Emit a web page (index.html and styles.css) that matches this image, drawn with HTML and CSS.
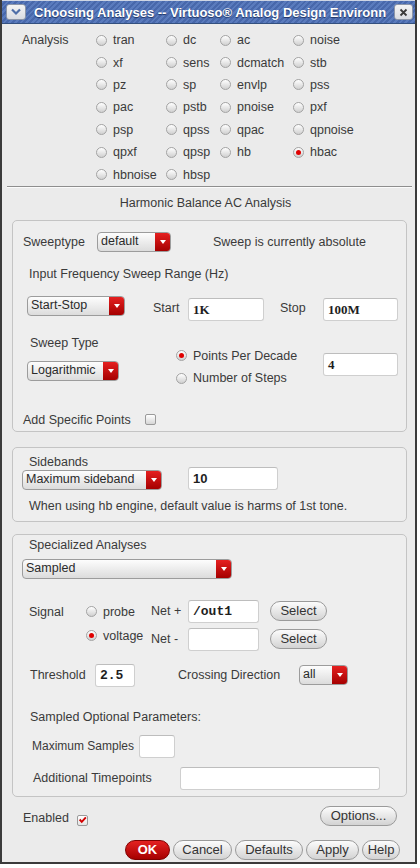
FILE: index.html
```html
<!DOCTYPE html>
<html>
<head>
<meta charset="utf-8">
<link rel="stylesheet" href="styles.css">
</head>
<body>
<div class="window">
  <div class="titlebar">
    <div class="tb-btn menu"><svg width="12" height="8" viewBox="0 0 12 8"><path d="M2 1.5 L6 5.5 L10 1.5" stroke="#4f6fa8" stroke-width="2.2" fill="none"/></svg></div>
    <div class="title">Choosing Analyses -- Virtuoso® Analog Design Environn</div>
    <div class="tb-btn close"><svg width="9" height="9" viewBox="0 0 9 9"><path d="M1.5 1.5 L7.5 7.5 M7.5 1.5 L1.5 7.5" stroke="#3a3a3a" stroke-width="1.8"/></svg></div>
  </div>

  <div class="analysis">
    <div class="a-label">Analysis</div>
    <div class="a-grid">
      <div class="ritem"><span class="radio"></span>tran</div>
      <div class="ritem"><span class="radio"></span>dc</div>
      <div class="ritem"><span class="radio"></span>ac</div>
      <div class="ritem"><span class="radio"></span>noise</div>
      <div class="ritem"><span class="radio"></span>xf</div>
      <div class="ritem"><span class="radio"></span>sens</div>
      <div class="ritem"><span class="radio"></span>dcmatch</div>
      <div class="ritem"><span class="radio"></span>stb</div>
      <div class="ritem"><span class="radio"></span>pz</div>
      <div class="ritem"><span class="radio"></span>sp</div>
      <div class="ritem"><span class="radio"></span>envlp</div>
      <div class="ritem"><span class="radio"></span>pss</div>
      <div class="ritem"><span class="radio"></span>pac</div>
      <div class="ritem"><span class="radio"></span>pstb</div>
      <div class="ritem"><span class="radio"></span>pnoise</div>
      <div class="ritem"><span class="radio"></span>pxf</div>
      <div class="ritem"><span class="radio"></span>psp</div>
      <div class="ritem"><span class="radio"></span>qpss</div>
      <div class="ritem"><span class="radio"></span>qpac</div>
      <div class="ritem"><span class="radio"></span>qpnoise</div>
      <div class="ritem"><span class="radio"></span>qpxf</div>
      <div class="ritem"><span class="radio"></span>qpsp</div>
      <div class="ritem"><span class="radio"></span>hb</div>
      <div class="ritem"><span class="radio on"></span>hbac</div>
      <div class="ritem"><span class="radio"></span>hbnoise</div>
      <div class="ritem"><span class="radio"></span>hbsp</div>
    </div>
  </div>

  <div class="sep"></div>
  <div class="section-title">Harmonic Balance AC Analysis</div>

  <div class="group g1">
    <div class="row r1">
      <div class="lbl w74">Sweeptype</div>
      <div class="dd w74"><span class="dd-text">default</span><span class="dd-btn"></span></div>
      <div class="lbl note1">Sweep is currently absolute</div>
    </div>
    <div class="lbl r2">Input Frequency Sweep Range (Hz)</div>
    <div class="row r3">
      <div class="dd w98 ml4"><span class="dd-text">Start-Stop</span><span class="dd-btn"></span></div>
      <div class="lbl start">Start</div>
      <div class="inp w76 serif">1K</div>
      <div class="lbl stop">Stop</div>
      <div class="inp w75 serif">100M</div>
    </div>
    <div class="row comp">
      <div class="col-left">
        <div class="lbl st-label">Sweep Type</div>
        <div class="dd w92 log"><span class="dd-text">Logarithmic</span><span class="dd-btn"></span></div>
      </div>
      <div class="col-mid">
        <div class="ritem rrow"><span class="radio on"></span>Points Per Decade</div>
        <div class="ritem rrow"><span class="radio"></span>Number of Steps</div>
      </div>
      <div class="col-right">
        <div class="inp w75 serif">4</div>
      </div>
    </div>
    <div class="row r6">
      <div class="lbl w122">Add Specific Points</div>
      <span class="check"></span>
    </div>
  </div>

  <div class="group g2">
    <div class="lbl g-title">Sidebands</div>
    <div class="row sb-row">
      <div class="dd w140 sb-dd"><span class="dd-text">Maximum sideband</span><span class="dd-btn"></span></div>
      <div class="inp w90 sb-inp sansb">10</div>
    </div>
    <div class="lbl sb-note">When using hb engine, default value is harms of 1st tone.</div>
  </div>

  <div class="group g3">
    <div class="lbl g-title g3-title">Specialized Analyses</div>
    <div class="dd w210 samp-dd"><span class="dd-text">Sampled</span><span class="dd-btn"></span></div>
    <div class="row signal">
      <div class="lbl sig-label">Signal</div>
      <div class="sig-radios">
        <div class="ritem srow"><span class="radio"></span>probe</div>
        <div class="ritem srow"><span class="radio on"></span>voltage</div>
      </div>
      <div class="net-grid">
        <div class="lbl">Net +</div>
        <div class="inp mono">/out1</div>
        <div class="btn sel">Select</div>
        <div class="lbl">Net -</div>
        <div class="inp"></div>
        <div class="btn sel">Select</div>
      </div>
    </div>
    <div class="row thr">
      <div class="lbl thr-label">Threshold</div>
      <div class="inp w40 mono">2.5</div>
      <div class="lbl cross-label">Crossing Direction</div>
      <div class="dd w49"><span class="dd-text">all</span><span class="dd-btn"></span></div>
    </div>
    <div class="lbl opt-label">Sampled Optional Parameters:</div>
    <div class="row maxs">
      <div class="lbl maxs-label">Maximum Samples</div>
      <div class="inp w36"></div>
    </div>
    <div class="row addt">
      <div class="lbl addt-label">Additional Timepoints</div>
      <div class="inp w200"></div>
    </div>
  </div>

  <div class="row enabled">
    <div class="lbl en-label">Enabled</div>
    <span class="check checked"><svg width="11" height="11" viewBox="0 0 11 11"><path d="M2 5.5 L4.6 8.4 L9.6 2.8" stroke="#d30000" stroke-width="2.3" fill="none"/></svg></span>
    <div class="btn options">Options...</div>
  </div>

  <div class="row buttons">
    <div class="btn ok">OK</div>
    <div class="btn b-cancel">Cancel</div>
    <div class="btn b-defaults">Defaults</div>
    <div class="btn b-apply">Apply</div>
    <div class="btn b-help">Help</div>
  </div>
</div>
</body>
</html>
```

FILE: styles.css
```css
* { box-sizing: border-box; }
html, body { margin: 0; padding: 0; background: #ffffff; }
body {
  font-family: "Liberation Sans", Arial, sans-serif;
  font-size: 12.5px;
  color: #3a3a3a;
}
.window {
  width: 417px;
  height: 864px;
  background: #ebebeb;
  border: 2px solid #3b3b3b;
  border-top: 0;
  overflow: hidden;
}
.titlebar {
  height: 24px;
  display: flex;
  align-items: center;
  padding: 0 2px 0 4px;
  background: repeating-linear-gradient(-45deg, #4868ab 0 2px, #5a7bbd 2px 4px);
  border-bottom: 1px solid #33507f;
  border-top: 1px solid #cfd6e4;
}
.tb-btn {
  width: 20px;
  height: 16px;
  border: 1px solid #8c96a8;
  border-radius: 3px;
  background: linear-gradient(#f4f4f4, #d9dce2);
  display: flex;
  align-items: center;
  justify-content: center;
  flex: none;
}
.tb-btn.close { width: 19px; }
.title {
  flex: 1;
  margin-left: 8px;
  color: #ffffff;
  font-weight: bold;
  font-size: 13px;
  white-space: nowrap;
  overflow: hidden;
  text-shadow: 0 1px 1px #1d3060;
}

/* Analysis radios */
.analysis { display: flex; padding: 5px 0 0 20px; }
.a-label { width: 74px; line-height: 22.4px; }
.a-grid {
  display: grid;
  grid-template-columns: 70px 54px 73px auto;
  grid-auto-rows: 22.4px;
}
.ritem { display: flex; align-items: center; gap: 6px; white-space: nowrap; }
.radio {
  width: 11px;
  height: 11px;
  border-radius: 50%;
  border: 1px solid #a3a3a3;
  background: linear-gradient(#ffffff, #d0d0d0);
  flex: none;
  display: flex;
  align-items: center;
  justify-content: center;
}
.radio.on::after {
  content: "";
  width: 5px;
  height: 5px;
  border-radius: 50%;
  background: #e00000;
}

.sep {
  margin: 0 3px 0 5px;
  border-top: 1px solid #8e8e8e;
  border-bottom: 1px solid #fbfbfb;
}
.section-title {
  text-align: center;
  line-height: 20px;
  margin-top: 5.5px;
  padding-right: 6px;
}

/* groups */
.group {
  width: 395px;
  margin-left: 10px;
  border: 1px solid #c4c4c4;
  border-radius: 5px;
  background: #eeeeee;
}
.g1 { margin-top: 6.5px; height: 212px; padding: 11px 0 0 10px; }
.g2 { margin-top: 15px; height: 75px; }
.g3 { margin-top: 12px; height: 263px; }

.row { display: flex; align-items: center; }
.lbl { line-height: 20px; white-space: nowrap; }

/* dropdown */
.dd {
  height: 20px;
  display: flex;
  border: 1px solid #9c9c9c;
  border-radius: 4px;
  background: linear-gradient(#fdfdfd, #dcdcdc);
  overflow: hidden;
  flex: none;
}
.dd-text { flex: 1; padding-left: 3px; line-height: 17px; color: #2a2a2a; white-space: nowrap; overflow: hidden; }
.dd-btn {
  width: 15px;
  background: linear-gradient(#e52020, #a50000);
  display: flex;
  align-items: center;
  justify-content: center;
  flex: none;
}
.dd-btn::after {
  content: "";
  border-left: 3.5px solid transparent;
  border-right: 3.5px solid transparent;
  border-top: 4px solid #ffffff;
}

/* input */
.inp {
  height: 23px;
  background: #ffffff;
  border: 1px solid #cfcfcf;
  border-top-color: #bdbdbd;
  border-radius: 3px;
  padding-left: 4px;
  line-height: 21px;
  color: #1e1e1e;
  flex: none;
}
.serif { font-family: "Liberation Serif", "Times New Roman", serif; font-weight: bold; font-size: 13px; }
.mono { font-family: "Liberation Mono", "Courier New", monospace; font-weight: bold; font-size: 13px; }
.sansb { font-weight: bold; font-size: 13px; }

/* buttons */
.btn {
  height: 20px;
  border: 1px solid #9a9a9a;
  border-radius: 10px;
  background: linear-gradient(#fcfcfc, #d3d3d3);
  text-align: center;
  line-height: 18px;
  color: #333333;
  font-size: 13px;
  flex: none;
}
.btn.ok {
  background: linear-gradient(#e42222, #a60000);
  border-color: #7e0000;
  color: #ffffff;
  font-weight: bold;
  font-size: 13px;
}

/* checkbox */
.check {
  width: 11px;
  height: 11px;
  border: 1px solid #9a9a9a;
  border-radius: 2px;
  background: linear-gradient(#ffffff, #d6d6d6);
  flex: none;
  display: flex;
  align-items: center;
  justify-content: center;
}
.check svg { margin-top: -1px; }

/* widths */
.w36 { width: 36px; }
.w40 { width: 40px; }
.w49 { width: 49px; }
.w74 { width: 74px; }
.w75 { width: 75px; }
.w76 { width: 76px; }
.w90 { width: 90px; }
.w92 { width: 92px; }
.w98 { width: 98px; }
.w122 { width: 122px; }
.w140 { width: 140px; }
.w200 { width: 200px; }
.w210 { width: 210px; }
.ml4 { margin-left: 4px; }

/* group 1 */
.r1 { height: 20px; }
.note1 { margin-left: 42px; }
.r2 { margin: 12px 0 0 6px; }
.r3 { margin-top: 12px; height: 26px; align-items: flex-start; }
.start { margin: 2px 0 0 28px; width: 35px; }
.stop { margin: 2px 0 0 16px; width: 43px; }
.r3 .inp { margin-top: 2px; }
.comp { margin: 11px 0 0 4px; height: 57px; align-items: flex-start; }
.col-left { width: 149px; }
.st-label { padding-left: 3px; }
.log { margin-top: 8px; }
.col-mid { width: 147px; padding-top: 12px; }
.rrow { height: 22.4px; }
.col-right { padding-top: 20px; }
.r6 { margin-top: 20px; height: 20px; }

/* group 2 */
.g-title { margin: 6px 0 0 16px; line-height: 16px; }
.sb-row { margin-top: -3px; align-items: flex-start; }
.sb-dd { margin: 3px 0 0 9px; }
.sb-inp { margin-left: 26px; }
.sb-note { margin: 6.7px 0 0 16px; }

/* group 3 */
.g3-title { margin-top: 2px; }
.samp-dd { margin: 6px 0 0 9px; }
.signal { margin-top: 21px; align-items: flex-start; }
.sig-label { margin: 2.7px 0 0 16px; width: 57px; }
.sig-radios { width: 65px; padding-top: 1px; display: flex; flex-direction: column; gap: 2px; }
.srow { height: 22px; }
.net-grid {
  display: grid;
  grid-template-columns: 37px 71px 68px;
  grid-template-rows: 23px 23px;
  row-gap: 5px;
  align-items: center;
}
.sel { margin-left: 11px; width: 57px; }
.thr { margin-top: 13px; height: 23px; }
.thr-label { margin-left: 17px; width: 65px; }
.cross-label { margin-left: 43px; width: 121px; }
.opt-label { margin: 20px 0 0 17px; }
.maxs { margin-top: 8px; }
.maxs-label { margin-left: 19px; width: 107px; font-size: 12px; }
.addt { margin-top: 9px; }
.addt-label { margin-left: 20px; width: 147px; }

/* footer */
.enabled { margin-top: 9.5px; height: 20px; align-items: flex-start; }
.en-label { margin: 2px 0 0 21px; width: 54px; }
.enabled .check { margin-top: 8.5px; background: linear-gradient(#ffffff, #e4e4e4); }
.options { margin-left: auto; margin-right: 18px; width: 77px; }
.buttons { margin-top: 14px; justify-content: flex-end; gap: 3px; padding-right: 15px; }
.ok { width: 45px; }
.b-cancel { width: 59px; }
.b-defaults { width: 68px; }
.b-apply { width: 53px; }
.b-help { width: 38px; }
```
